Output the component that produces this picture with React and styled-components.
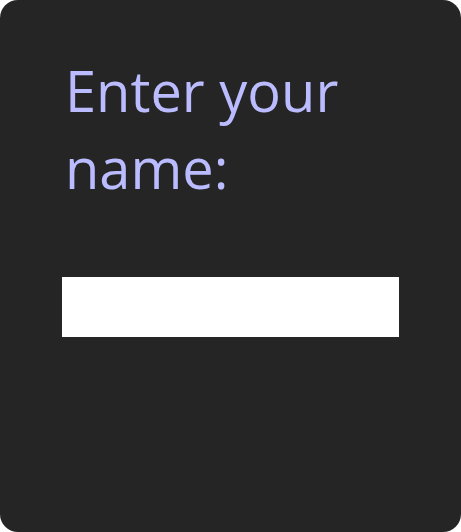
import React from 'react';
import styled, { createGlobalStyle } from 'styled-components';

const GlobalStyle = createGlobalStyle`
  html, body {
    margin: 0;
    padding: 0;
    background: #ffffff;
  }
`;

const Card = styled.div`
  box-sizing: border-box;
  width: 461px;
  height: 532px;
  background: #252525;
  border-radius: 18px;
  padding: 52px 62px 0 62px;
  display: flex;
  flex-direction: column;
`;

const Label = styled.label`
  font-family: 'Open Sans', 'Noto Sans', sans-serif;
  font-size: 56px;
  line-height: 77px;
  color: #bbbbff;
  margin: 0 0 0 3px;
`;

const NameInput = styled.input`
  box-sizing: border-box;
  width: 337px;
  height: 60px;
  margin-top: 71px;
  border: none;
  outline: none;
  background: #ffffff;
  padding: 0 12px;
  font-family: 'Open Sans', sans-serif;
  font-size: 24px;
`;

const App = () => {
  return (
    <>
      <GlobalStyle />
      <Card>
        <Label htmlFor="name">Enter your name:</Label>
        <NameInput id="name" type="text" />
      </Card>
    </>
  );
};

export default App;
